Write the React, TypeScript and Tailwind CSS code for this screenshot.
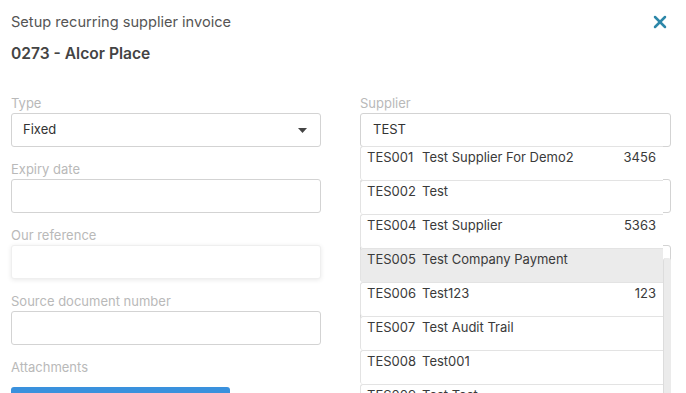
import { X } from 'lucide-react';

const suppliers = [
  { code: 'TES001', name: 'Test Supplier For Demo2', num: '3456' },
  { code: 'TES002', name: 'Test', num: '' },
  { code: 'TES004', name: 'Test Supplier', num: '5363' },
  { code: 'TES005', name: 'Test Company Payment', num: '', active: true },
  { code: 'TES006', name: 'Test123', num: '123' },
  { code: 'TES007', name: 'Test Audit Trail', num: '' },
  { code: 'TES008', name: 'Test001', num: '' },
  { code: 'TES009', name: 'Test Test', num: '' },
];

function Field({ label, children }: { label: string; children?: React.ReactNode }) {
  return (
    <div className="mb-[14px]">
      <div className="h-4 text-[13px] leading-4 text-[#b9b9b9]">{label}</div>
      <div className="mt-[2px]">{children ?? <div className="h-[34px] rounded-[3px] border border-[#d3d3d3] bg-white" />}</div>
    </div>
  );
}

export default function App() {
  return (
    <div
      className="relative h-[393px] w-[686px] overflow-hidden bg-white px-[11px]"
      style={{ fontFamily: 'Inter, "Noto Sans", sans-serif' }}
    >
      <div className="flex items-start justify-between pt-3">
        <h1 className="text-[14.6px] leading-5 text-[#555]">Setup recurring supplier invoice</h1>
        <button className="mr-[5px] mt-[0px] text-[#2d87a9]">
          <X className="h-[20px] w-[20px]" strokeWidth={3} />
        </button>
      </div>
      <h2 className="mt-[11px] text-[15.6px] font-semibold leading-[22px] text-[#444]">0273 - Alcor Place</h2>

      <div className="mt-[30px] grid grid-cols-[310px_311px] gap-x-[39px]">
        {/* left column */}
        <div>
          <Field label="Type">
            <div className="flex h-[34px] items-center justify-between rounded-[3px] border border-[#d3d3d3] pl-[11px] pr-[13px] text-[13px] text-[#333]">
              <span>Fixed</span>
              <svg width="9" height="5" viewBox="0 0 9 5">
                <path d="M0 0h9L4.5 5z" fill="#444" />
              </svg>
            </div>
          </Field>
          <Field label="Expiry date" />
          <Field label="Our reference">
            <div className="h-[34px] rounded-[3px] border border-[#efefef] bg-white shadow-[0_1px_5px_rgba(0,0,0,0.09)]" />
          </Field>
          <Field label="Source document number" />
          <div className="h-4 text-[13px] leading-4 text-[#b9b9b9]">Attachments</div>
          <div className="mt-3 h-9 w-[219px] rounded-t-[3px] bg-[#3a91dd]" />
        </div>

        {/* right column */}
        <div className="relative">
          <Field label="Supplier">
            <div className="flex h-[34px] items-center rounded-[3px] border border-[#d3d3d3] px-3 text-[13px] text-[#333]">
              TEST
            </div>
          </Field>
          <Field label="" />
          <Field label="" />
          <Field label="" />

          <div className="absolute left-0 top-[51px] w-[303px]">
            {suppliers.map((s) => (
              <div
                key={s.code}
                className={`flex h-[34px] items-start rounded-l-[3px] border-l border-t border-[#e3e3e3] pl-[6px] pr-[7px] pt-[1px] text-[13px] leading-[18px] text-[#3a3a3a] ${
                  s.active ? 'bg-[#ebebeb]' : 'bg-white'
                }`}
              >
                <span className="w-[55px] shrink-0">{s.code}</span>
                <span className="flex-1">{s.name}</span>
                <span>{s.num}</span>
              </div>
            ))}
          </div>
          <div className="absolute left-[303px] top-[163px] bottom-[-40px] w-[8px] rounded-t-[3px] border-l border-[#dcdcdc] bg-[#ebebeb]" />
        </div>
      </div>
    </div>
  );
}
